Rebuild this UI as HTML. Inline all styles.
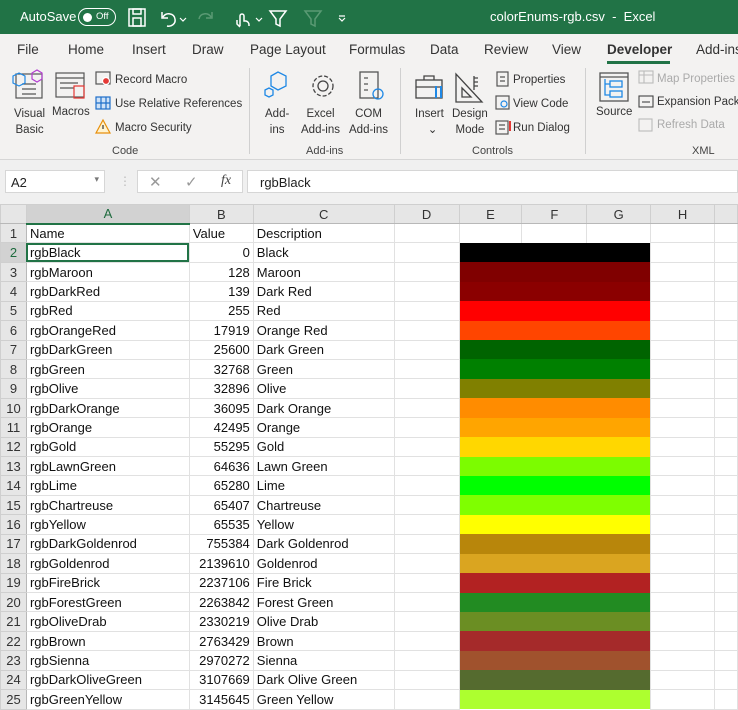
<!DOCTYPE html>
<html><head><meta charset="utf-8"><style>
*{margin:0;padding:0;box-sizing:border-box}
body{width:738px;height:696px;overflow:hidden;background:#fff;font-family:"Liberation Sans",sans-serif;position:relative}
.abs{position:absolute}
#title{left:0;top:0;width:738px;height:34px;background:#217346;color:#fff;font-size:13px}
#tabs{left:0;top:34px;width:738px;height:30px;background:#f3f2f1;font-size:13.5px;color:#333}
#ribbon{left:0;top:64px;width:738px;height:96px;background:#f3f2f1;font-size:11.5px;color:#333;border-bottom:1px solid #d6d6d6}
#gap{left:0;top:160px;width:738px;height:45px;background:#f0f0f0}
.t{position:absolute;white-space:nowrap}
.sep{position:absolute;width:1px;background:#d0d0d0}
.grp{position:absolute;font-size:11px;color:#444;top:81px}
table{position:absolute;left:0;top:204px;border-collapse:collapse;table-layout:fixed;font-size:13px;color:#111}
td{border:1px solid #e1e1e1;height:19.43px;padding:0 3px;white-space:nowrap;overflow:hidden;line-height:17px}
tr.h td{background:#e6e6e6;text-align:center;color:#333;border-color:#cfcfcf;height:19px;border-bottom:1px solid #b8b8b8}
td.rh{background:#e6e6e6;text-align:center;color:#333;border-color:#cfcfcf;border-right:1px solid #b8b8b8;padding:0}
td.r{text-align:right}
td[colspan]{border-top:hidden;border-bottom:hidden}
</style></head><body>
<div id="title" class="abs">
 <div class="t" style="left:20px;top:9px;font-size:13px">AutoSave</div>
 <div class="t" style="left:78px;top:8px;width:38px;height:18px;border:1.5px solid #fff;border-radius:9px"></div>
 <div class="t" style="left:83px;top:12.5px;width:9px;height:9px;background:#fff;border-radius:50%"></div>
 <div class="t" style="left:96px;top:11px;font-size:9.5px">Off</div>
 <svg class="t" style="left:126px;top:6px" width="230" height="24" fill="none" stroke="#fff" stroke-width="1.5">
  <rect x="3" y="3" width="16" height="17"/><rect x="7" y="3" width="8" height="5"/><rect x="7" y="12" width="8" height="8"/>
  <path d="M36 6v6h6M37 11c3-5 11-4 12 2 1 5-4 8-8 7"/><path d="M54 12l3 3 3-3" stroke-width="1.2"/>
  <path d="M86 6v6h-6M85 11c-3-5-11-4-12 2" stroke="#5a9a74"/>
  <path d="M114 20v-10a2 2 0 0 1 4 0v5h2a4 4 0 0 1 3 4v1M111 14v4l3 3"/><path d="M130 12l3 3 3-3" stroke-width="1.2"/>
  <path d="M144 5h16l-6 8v7l-4-2v-5z"/>
  <path d="M179 5h16l-6 8v7l-4-2v-5z" stroke="#5a9a74"/>
  <path d="M213 10h6M213 12l3 3 3-3" stroke-width="1.2"/>
 </svg>
 <div class="t" style="left:490px;top:9px">colorEnums-rgb.csv&nbsp; - &nbsp;Excel</div>
</div>
<div id="tabs" class="abs">
 <div class="t" style="left:17px;top:8px">File</div>
 <div class="t" style="left:68px;top:8px">Home</div>
 <div class="t" style="left:132px;top:8px">Insert</div>
 <div class="t" style="left:192px;top:8px">Draw</div>
 <div class="t" style="left:250px;top:8px">Page Layout</div>
 <div class="t" style="left:349px;top:8px">Formulas</div>
 <div class="t" style="left:430px;top:8px">Data</div>
 <div class="t" style="left:484px;top:8px">Review</div>
 <div class="t" style="left:552px;top:8px">View</div>
 <div class="t" style="left:607px;top:8px;font-weight:bold;color:#333">Developer</div>
 <div class="t" style="left:607px;top:27px;width:63px;height:3px;background:#217346"></div>
 <div class="t" style="left:696px;top:8px">Add-ins</div>
</div>
<div id="ribbon" class="abs">
 <svg class="t" style="left:10px;top:4px" width="80" height="32" fill="none" stroke-width="1.2">
  <rect x="6" y="6" width="26" height="24" stroke="#555"/><path d="M12 16h14M12 21h14M12 26h14" stroke="#555"/>
  <path d="M3 8l6-3 6 3v7l-6 3-6-3z" stroke="#1e88e5"/><path d="M22 5l5-3 5 3v6l-5 3-5-3z" stroke="#b43fd1"/>
  <rect x="46" y="5" width="28" height="24" stroke="#555"/><path d="M46 10h28M50 15h18M50 20h14" stroke="#555"/>
  <path d="M64 18h10v12h-10z" stroke="#e53935"/>
 </svg>
 <div class="t" style="left:14px;top:42px;text-align:center;line-height:16px">Visual<br>Basic</div>
 <div class="t" style="left:52px;top:42px">Macros</div>
 <svg class="t" style="left:95px;top:6px" width="18" height="74" fill="none" stroke-width="1.2">
  <rect x="1" y="2" width="14" height="12" stroke="#555"/><circle cx="11" cy="11" r="3.5" fill="#e53935" stroke="#fff"/>
  <rect x="1" y="27" width="14" height="12" stroke="#1e6fc9" fill="#cfe2f7"/><path d="M1 33h14M6 27v12M11 27v12" stroke="#1e6fc9"/>
  <path d="M8 50l7 13H1z" stroke="#e8900c" fill="#fff3d0"/><path d="M8 55v4" stroke="#333"/>
 </svg>
 <div class="t" style="left:115px;top:10px">Record Macro</div>
 <div class="t" style="left:115px;top:34px">Use Relative References</div>
 <div class="t" style="left:115px;top:58px">Macro Security</div>
 <div class="grp" style="left:112px">Code</div>
 <div class="sep" style="left:249px;top:4px;height:86px"></div>
 <svg class="t" style="left:262px;top:6px" width="130" height="34" fill="none" stroke-width="1.3">
  <path d="M9 6l7-4 8 4v10l-8 4-7-4z" stroke="#1e88e5"/><path d="M3 20l4-2 4 2v5l-4 2-4-2z" stroke="#1e88e5"/>
  <circle cx="61" cy="16" r="5" stroke="#444"/><circle cx="61" cy="16" r="10" stroke="#444" stroke-dasharray="4 2"/>
  <rect x="98" y="2" width="18" height="26" stroke="#555"/><path d="M102 8h4M102 14h4M102 20h4" stroke="#555"/><circle cx="116" cy="24" r="5" stroke="#1e88e5"/>
 </svg>
 <div class="t" style="left:265px;top:42px;text-align:center;line-height:16px">Add-<br>ins</div>
 <div class="t" style="left:301px;top:42px;text-align:center;line-height:16px">Excel<br>Add-ins</div>
 <div class="t" style="left:349px;top:42px;text-align:center;line-height:16px">COM<br>Add-ins</div>
 <div class="grp" style="left:306px">Add-ins</div>
 <div class="sep" style="left:400px;top:4px;height:86px"></div>
 <svg class="t" style="left:414px;top:8px" width="80" height="32" fill="none" stroke-width="1.3">
  <rect x="2" y="8" width="26" height="18" stroke="#444"/><path d="M10 8V4h10v4M2 15h26" stroke="#444"/><path d="M22 14v12M27 14v12" stroke="#1e88e5" stroke-width="2"/>
  <path d="M42 2v28h26z" stroke="#444"/><path d="M48 16v9h9z" stroke="#444"/><path d="M60 4v14M60 6h4M60 10h4M60 14h4" stroke="#444"/>
 </svg>
 <div class="t" style="left:415px;top:42px;text-align:center;line-height:16px">Insert<br>&nbsp;&nbsp;⌄</div>
 <div class="t" style="left:452px;top:42px;text-align:center;line-height:16px">Design<br>Mode</div>
 <svg class="t" style="left:495px;top:6px" width="16" height="74" fill="none" stroke-width="1.2">
  <rect x="2" y="2" width="11" height="14" stroke="#555"/><path d="M5 7h5M5 11h5" stroke="#555"/>
  <rect x="1" y="26" width="13" height="13" stroke="#555"/><circle cx="9" cy="34" r="3" stroke="#1e88e5"/>
  <rect x="1" y="51" width="12" height="13" stroke="#555"/><path d="M4 55h6M4 59h6" stroke="#555"/><path d="M15 51v10" stroke="#e53935" stroke-width="2"/>
 </svg>
 <div class="t" style="left:513px;top:10px">Properties</div>
 <div class="t" style="left:513px;top:34px">View Code</div>
 <div class="t" style="left:513px;top:58px">Run Dialog</div>
 <div class="grp" style="left:472px">Controls</div>
 <div class="sep" style="left:585px;top:4px;height:86px"></div>
 <svg class="t" style="left:598px;top:6px" width="34" height="34" fill="none" stroke-width="1.3">
  <rect x="2" y="3" width="28" height="28" stroke="#555"/><path d="M2 7h28" stroke="#555"/><rect x="12" y="11" width="12" height="6" stroke="#1e88e5"/><rect x="12" y="21" width="12" height="6" stroke="#1e88e5"/><path d="M7 9v16h5M7 14h5" stroke="#1e88e5"/>
 </svg>
 <div class="t" style="left:596px;top:42px">Source</div>
 <svg class="t" style="left:638px;top:5px" width="16" height="74" fill="none" stroke-width="1.1">
  <rect x="1" y="2" width="14" height="12" stroke="#bbb"/><path d="M1 6h14M6 2v12" stroke="#bbb"/>
  <rect x="1" y="27" width="14" height="11" stroke="#444"/><path d="M4 33h8" stroke="#444"/>
  <rect x="1" y="50" width="13" height="12" stroke="#bbb"/>
 </svg>
 <div class="t" style="left:657px;top:9px;color:#aaa">Map Properties</div>
 <div class="t" style="left:657px;top:32px">Expansion Packs</div>
 <div class="t" style="left:657px;top:55px;color:#aaa">Refresh Data</div>
 <div class="grp" style="left:692px">XML</div>
</div>
<div id="gap" class="abs">
 <div class="t" style="left:5px;top:10px;width:100px;height:23px;background:#fff;border:1px solid #d6d6d6;font-size:13px;padding:4px 5px;color:#222">A2<span style="position:absolute;right:5px;top:3px;font-size:9px;color:#777">▾</span></div>
 <div class="t" style="left:119px;top:14px;color:#bbb;font-size:12px">⋮</div>
 <div class="t" style="left:137px;top:10px;width:106px;height:23px;background:#fff;border:1px solid #d6d6d6;color:#999;font-size:15px;padding-top:2px">
  <span style="position:absolute;left:11px">✕</span><span style="position:absolute;left:47px">✓</span><span style="position:absolute;left:83px;font-family:'Liberation Serif',serif;font-style:italic;font-size:14px;color:#444">fx</span></div>
 <div class="t" style="left:247px;top:10px;width:491px;height:23px;background:#fff;border:1px solid #d6d6d6;font-size:13px;padding:4px 12px;color:#222">rgbBlack</div>
</div>
<table>
<colgroup><col style="width:26px"><col style="width:163px"><col style="width:64px"><col style="width:141px"><col style="width:65px"><col style="width:63px"><col style="width:65px"><col style="width:64px"><col style="width:64px"><col style="width:23px"></colgroup>
<tr class="h"><td style="background:#e6e6e6"></td><td style="background:#d2d2d2;border-bottom:2px solid #217346;color:#1e6b3e">A</td><td>B</td><td>C</td><td>D</td><td>E</td><td>F</td><td>G</td><td>H</td><td></td></tr>
<tr><td class="rh">1</td><td>Name</td><td>Value</td><td>Description</td><td></td><td></td><td></td><td></td><td></td><td></td></tr>
<tr><td class="rh" style="background:#d2d2d2;color:#1e6b3e">2</td><td style="outline:2px solid #217346;outline-offset:-2px">rgbBlack</td><td class="r">0</td><td>Black</td><td></td><td colspan="3" style="background:#000000"></td><td></td><td></td></tr>
<tr><td class="rh">3</td><td>rgbMaroon</td><td class="r">128</td><td>Maroon</td><td></td><td colspan="3" style="background:#800000"></td><td></td><td></td></tr>
<tr><td class="rh">4</td><td>rgbDarkRed</td><td class="r">139</td><td>Dark Red</td><td></td><td colspan="3" style="background:#8B0000"></td><td></td><td></td></tr>
<tr><td class="rh">5</td><td>rgbRed</td><td class="r">255</td><td>Red</td><td></td><td colspan="3" style="background:#FF0000"></td><td></td><td></td></tr>
<tr><td class="rh">6</td><td>rgbOrangeRed</td><td class="r">17919</td><td>Orange Red</td><td></td><td colspan="3" style="background:#FF4500"></td><td></td><td></td></tr>
<tr><td class="rh">7</td><td>rgbDarkGreen</td><td class="r">25600</td><td>Dark Green</td><td></td><td colspan="3" style="background:#006400"></td><td></td><td></td></tr>
<tr><td class="rh">8</td><td>rgbGreen</td><td class="r">32768</td><td>Green</td><td></td><td colspan="3" style="background:#008000"></td><td></td><td></td></tr>
<tr><td class="rh">9</td><td>rgbOlive</td><td class="r">32896</td><td>Olive</td><td></td><td colspan="3" style="background:#808000"></td><td></td><td></td></tr>
<tr><td class="rh">10</td><td>rgbDarkOrange</td><td class="r">36095</td><td>Dark Orange</td><td></td><td colspan="3" style="background:#FF8C00"></td><td></td><td></td></tr>
<tr><td class="rh">11</td><td>rgbOrange</td><td class="r">42495</td><td>Orange</td><td></td><td colspan="3" style="background:#FFA500"></td><td></td><td></td></tr>
<tr><td class="rh">12</td><td>rgbGold</td><td class="r">55295</td><td>Gold</td><td></td><td colspan="3" style="background:#FFD700"></td><td></td><td></td></tr>
<tr><td class="rh">13</td><td>rgbLawnGreen</td><td class="r">64636</td><td>Lawn Green</td><td></td><td colspan="3" style="background:#7CFC00"></td><td></td><td></td></tr>
<tr><td class="rh">14</td><td>rgbLime</td><td class="r">65280</td><td>Lime</td><td></td><td colspan="3" style="background:#00FF00"></td><td></td><td></td></tr>
<tr><td class="rh">15</td><td>rgbChartreuse</td><td class="r">65407</td><td>Chartreuse</td><td></td><td colspan="3" style="background:#7FFF00"></td><td></td><td></td></tr>
<tr><td class="rh">16</td><td>rgbYellow</td><td class="r">65535</td><td>Yellow</td><td></td><td colspan="3" style="background:#FFFF00"></td><td></td><td></td></tr>
<tr><td class="rh">17</td><td>rgbDarkGoldenrod</td><td class="r">755384</td><td>Dark Goldenrod</td><td></td><td colspan="3" style="background:#B8860B"></td><td></td><td></td></tr>
<tr><td class="rh">18</td><td>rgbGoldenrod</td><td class="r">2139610</td><td>Goldenrod</td><td></td><td colspan="3" style="background:#DAA520"></td><td></td><td></td></tr>
<tr><td class="rh">19</td><td>rgbFireBrick</td><td class="r">2237106</td><td>Fire Brick</td><td></td><td colspan="3" style="background:#B22222"></td><td></td><td></td></tr>
<tr><td class="rh">20</td><td>rgbForestGreen</td><td class="r">2263842</td><td>Forest Green</td><td></td><td colspan="3" style="background:#228B22"></td><td></td><td></td></tr>
<tr><td class="rh">21</td><td>rgbOliveDrab</td><td class="r">2330219</td><td>Olive Drab</td><td></td><td colspan="3" style="background:#6B8E23"></td><td></td><td></td></tr>
<tr><td class="rh">22</td><td>rgbBrown</td><td class="r">2763429</td><td>Brown</td><td></td><td colspan="3" style="background:#A52A2A"></td><td></td><td></td></tr>
<tr><td class="rh">23</td><td>rgbSienna</td><td class="r">2970272</td><td>Sienna</td><td></td><td colspan="3" style="background:#A0522D"></td><td></td><td></td></tr>
<tr><td class="rh">24</td><td>rgbDarkOliveGreen</td><td class="r">3107669</td><td>Dark Olive Green</td><td></td><td colspan="3" style="background:#556B2F"></td><td></td><td></td></tr>
<tr><td class="rh">25</td><td>rgbGreenYellow</td><td class="r">3145645</td><td>Green Yellow</td><td></td><td colspan="3" style="background:#ADFF2F"></td><td></td><td></td></tr>
</table>
</body></html>
